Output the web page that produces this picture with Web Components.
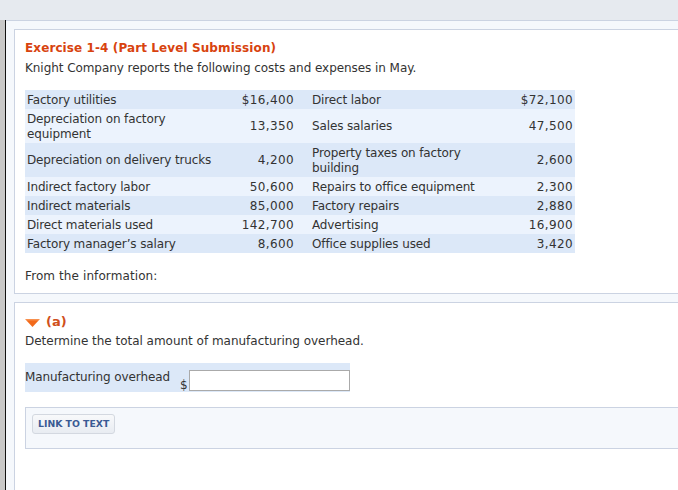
<!DOCTYPE html>
<html><head><meta charset="utf-8"><style>
html,body{margin:0;padding:0;height:490px;overflow:hidden;background:#fff}
body{font:12px/15px "DejaVu Sans",Verdana,sans-serif;color:#333}
</style></head><body>
<hw-page>
<hw-panel>
<h-title>Exercise 1-4 (Part Level Submission)</h-title>
<p-text style="margin-top:5px;letter-spacing:-.06px">Knight Company reports the following costs and expenses in May.</p-text>
<cost-table style="margin-top:14px"></cost-table>
<p-text style="margin-top:16px;letter-spacing:.1px">From the information:</p-text>
</hw-panel>
<hw-panel style="margin-top:8px" class="b">
<part-head>(a)</part-head>
<p-text style="margin-top:4px;letter-spacing:-.02px">Determine the total amount of manufacturing overhead.</p-text>
<answer-row style="margin-top:14px"></answer-row>
<link-box style="margin-top:15px"></link-box>
</hw-panel>
</hw-page>
<script>
function def(name,html,init){customElements.define(name,class extends HTMLElement{connectedCallback(){if(this.shadowRoot)return;const r=this.attachShadow({mode:'open'});r.innerHTML=html;if(init)init(r,this)}})}
def('hw-page',`<style>:host{display:block;height:490px;box-sizing:border-box;background:#e6eaef}
.top{height:20px}
.main{display:flex;height:470px}
.rail{width:5px;background:#c8c8c8;flex:none}
.line{width:1px;background:#111;flex:none}
.body{flex:1;min-width:0;background:#f5f8fc;border-top:1px solid #cbd3e2;padding:8px 0 0 8px;overflow:hidden}
</style><div class="top"></div><div class="main"><div class="rail"></div><div class="line"></div><div class="body"><slot></slot></div></div>`);
def('hw-panel',`<style>:host{display:block;background:#fff;border:1px solid #cbd3e2;border-right:0;padding:10px 0 10px 10px;box-sizing:border-box;height:265px}
:host(.b){border-bottom:0;height:400px;padding-top:11px}</style><slot></slot>`);
def('h-title',`<style>:host{display:block;font-weight:700;color:#d8430f;font-size:12px;letter-spacing:.1px;line-height:16px}</style><slot></slot>`);
def('p-text',`<style>:host{display:block}</style><slot></slot>`);
def('part-head',`<style>:host{display:flex;align-items:center;gap:6px;font-weight:700;color:#d0501c;font-size:13px;line-height:16px}
svg{display:block;margin-top:1px}</style><svg width="15" height="8" viewBox="0 0 15 8"><defs><linearGradient id="g" x1="0" y1="0" x2="0" y2="1"><stop offset="0" stop-color="#f89a5c"/><stop offset=".3" stop-color="#f26a1b"/></linearGradient></defs><path d="M0 0H15L7.5 8Z" fill="url(#g)"/></svg><slot></slot>`);
const rows=[["Factory utilities","$16,400","Direct labor","$72,100"],
["Depreciation on factory equipment","13,350","Sales salaries","47,500"],
["Depreciation on delivery trucks","4,200","Property taxes on factory building","2,600"],
["Indirect factory labor","50,600","Repairs to office equipment","2,300"],
["Indirect materials","85,000","Factory repairs","2,880"],
["Direct materials used","142,700","Advertising","16,900"],
["Factory manager’s salary","8,600","Office supplies used","3,420"]];
const tall=[[0,0,0,0],[0,1,1,1],[1,1,0,1]];
def('cost-table',`<style>:host{display:block;width:550px}
table{border-collapse:collapse;width:550px;table-layout:fixed}
tr:nth-child(odd){background:#dce8f8}tr:nth-child(even){background:#ecf3fd}
td{padding:3px 2px 1px;vertical-align:middle;line-height:15px;letter-spacing:-.13px}
td.n{text-align:right;letter-spacing:.37px}
td.s{padding:2px}
</style><table><colgroup><col style="width:200px"><col style="width:71px"><col style="width:14px"><col style="width:191px"><col style="width:74px"></colgroup><tbody>${rows.map((r,i)=>{const t=tall[i]||[0,0,0,0],c=k=>t[k]?' s':'';return `<tr><td class="${c(0)}">${r[0]}</td><td class="n${c(1)}">${r[1]}</td><td></td><td class="${c(2)}">${r[2]}</td><td class="n${c(3)}">${r[3]}</td></tr>`}).join('')}</tbody></table>`);
def('answer-row',`<style>:host{display:flex;width:325px;height:29px;background:#dce8f8;box-sizing:border-box}
.l{margin-top:7px;width:155px;letter-spacing:-.1px}.d{margin-top:15px;width:9px;font-size:12px;line-height:15px}
.i{margin-top:7px;width:161px;height:21px;box-sizing:border-box;border:1px solid #aaa;background:#fff}
</style><span class="l">Manufacturing overhead</span><span class="d">$</span><span class="i"></span>`);
def('link-box',`<style>:host{display:block;height:42px;background:#f5f8fc;border:1px solid #cbd3e2;border-right:0;padding:6px;box-sizing:border-box}
.b{display:inline-block;box-sizing:border-box;height:20px;padding:0 5px;border:1px solid #d3d8e0;border-radius:3px;background:linear-gradient(#f8f9fb,#e8ecf2);color:#3a5a94;font:700 9.3px/18px "DejaVu Sans",sans-serif}
</style><span class="b">LINK TO TEXT</span>`);
</script></body></html>
